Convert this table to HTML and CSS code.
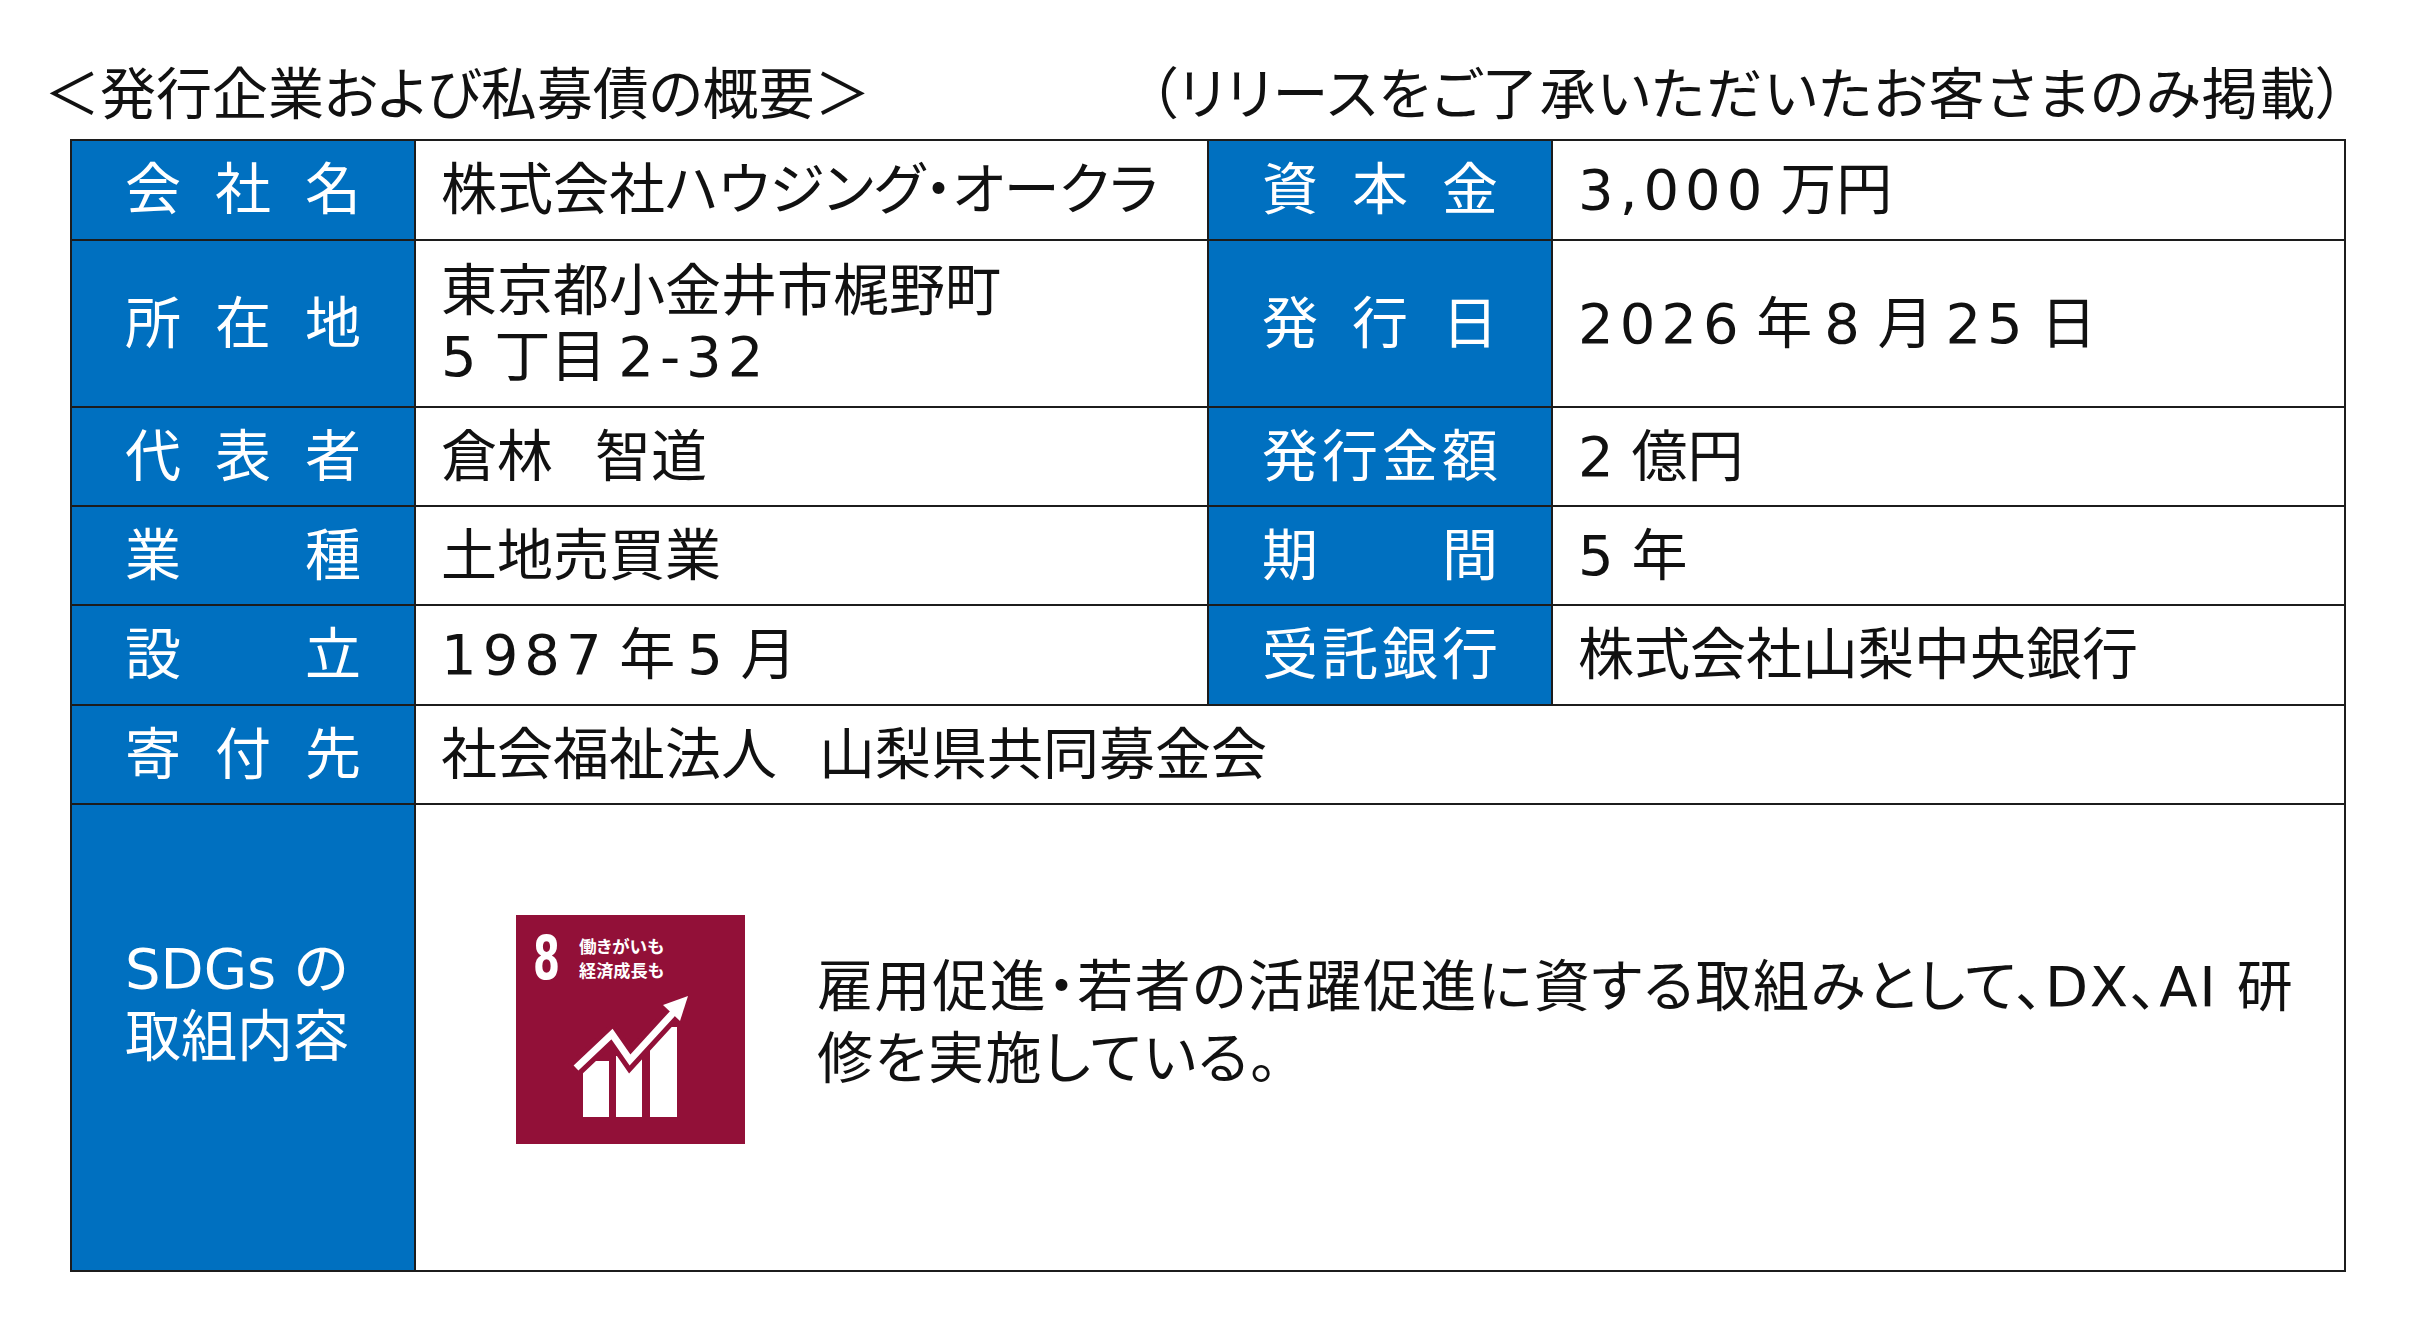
FILE: index.html
```html
<!DOCTYPE html>
<html lang="ja">
<head>
<meta charset="utf-8">
<title>発行企業および私募債の概要</title>
<link rel="stylesheet" href="styles.css">
</head>
<body>
<div class="page">
  <div class="head">
    <div class="head-left">＜発行企業および私募債の概要＞</div>
    <div class="head-right">（リリースをご了承いただいたお客さまのみ掲載）</div>
  </div>
  <div class="sheet">
    <div class="lab"><div class="sp"><span>会</span><span>社</span><span>名</span></div></div>
    <div class="val"><div class="txt">株式会社ハウジング・オークラ</div></div>
    <div class="lab"><div class="sp"><span>資</span><span>本</span><span>金</span></div></div>
    <div class="val"><div class="txt"><span class="num">3,000</span> 万円</div></div>

    <div class="lab"><div class="sp"><span>所</span><span>在</span><span>地</span></div></div>
    <div class="val"><div class="txt">東京都小金井市梶野町<br><span class="num">5</span> 丁目 <span class="num">2-32</span></div></div>
    <div class="lab"><div class="sp"><span>発</span><span>行</span><span>日</span></div></div>
    <div class="val"><div class="txt"><span class="num">2026</span> 年 <span class="num">8</span> 月 <span class="num">25</span> 日</div></div>

    <div class="lab"><div class="sp"><span>代</span><span>表</span><span>者</span></div></div>
    <div class="val"><div class="txt">倉林<span class="zs">　</span>智道</div></div>
    <div class="lab"><div class="sp"><span>発</span><span>行</span><span>金</span><span>額</span></div></div>
    <div class="val"><div class="txt"><span class="num">2</span> 億円</div></div>

    <div class="lab"><div class="sp"><span>業</span><span>種</span></div></div>
    <div class="val"><div class="txt">土地売買業</div></div>
    <div class="lab"><div class="sp"><span>期</span><span>間</span></div></div>
    <div class="val"><div class="txt"><span class="num">5</span> 年</div></div>

    <div class="lab"><div class="sp"><span>設</span><span>立</span></div></div>
    <div class="val"><div class="txt"><span class="num">1987</span> 年 <span class="num">5</span> 月</div></div>
    <div class="lab"><div class="sp"><span>受</span><span>託</span><span>銀</span><span>行</span></div></div>
    <div class="val"><div class="txt">株式会社山梨中央銀行</div></div>

    <div class="lab"><div class="sp"><span>寄</span><span>付</span><span>先</span></div></div>
    <div class="val wide"><div class="txt">社会福祉法人<span class="zs">　</span>山梨県共同募金会</div></div>

    <div class="lab lab-sdg"><div class="sdg-title">SDGs の<br>取組内容</div></div>
    <div class="val wide sdg-val">
      <svg class="sdg-icon" width="229" height="229" viewBox="0 0 229 229" xmlns="http://www.w3.org/2000/svg">
        <rect x="0" y="0" width="229" height="229" fill="#921038"/>
        <text x="17" y="64" class="sdg-num" textLength="27" lengthAdjust="spacingAndGlyphs">8</text>
        <text x="63" y="38" class="sdg-txt" textLength="85" lengthAdjust="spacingAndGlyphs">働きがいも</text>
        <text x="63" y="62" class="sdg-txt" textLength="85" lengthAdjust="spacingAndGlyphs">経済成長も</text>
        <rect x="67" y="146" width="26" height="56" fill="#fff"/>
        <rect x="100" y="141" width="26" height="61" fill="#fff"/>
        <rect x="134" y="112" width="27" height="90" fill="#fff"/>
        <polyline points="58,155 96,119 114,145 157,98" fill="none" stroke="#921038" stroke-width="17" stroke-linejoin="miter"/>
        <polyline points="60,153 96,119 114,145 157,98" fill="none" stroke="#fff" stroke-width="7" stroke-linejoin="miter"/>
        <polygon points="172,81 164,106 147,90" fill="#fff"/>
      </svg>
      <p class="sdg-desc">雇用促進・若者の活躍促進に資する取組みとして、DX、AI 研<br>修を実施している。</p>
    </div>
  </div>
</div>
</body>
</html>
```

FILE: styles.css
```css
* { box-sizing: border-box; }
html, body { margin: 0; padding: 0; background: #ffffff; }
body {
  font-family: "DejaVu Sans", "Noto Sans CJK JP", sans-serif;
  font-feature-settings: "palt";
  color: #111111;
}
.page {
  padding: 60px 0 0 70px;
  width: 2409px;
}
.head {
  display: flex;
  justify-content: space-between;
  width: 2302px;
  margin-left: -26px;
  font-size: 56px;
  line-height: 70px;
  height: 70px;
}
.head-right { letter-spacing: 1.4px; }
.sheet {
  margin-top: 9px;
  width: 2276px;
  display: grid;
  grid-template-columns: 342px 791px 342px 791px;
  grid-template-rows: 98px 165px 97px 97px 98px 97px 465px;
  gap: 2px;
  padding: 2px;
  background: #1c1c1c;
}
.lab {
  background: #0070c0;
  color: #ffffff;
  font-size: 56px;
  line-height: 66px;
  display: flex;
  align-items: center;
  justify-content: center;
}
.lab .sp {
  display: flex;
  justify-content: space-between;
  width: 236px;
}
.val {
  background: #ffffff;
  font-size: 56px;
  line-height: 66px;
  display: flex;
  align-items: center;
  padding-left: 25px;
  word-spacing: -6px;
}
.num { letter-spacing: 6px; }
.zs { letter-spacing: -14px; }
.wide { grid-column: span 3; }
.lab-sdg { padding-bottom: 70px; }
.sdg-title {
  width: 236px;
  line-height: 68px;
  text-align: left;
}
.sdg-val {
  align-items: center;
  justify-content: flex-start;
  padding-left: 100px;
  padding-bottom: 16px;
  gap: 72px;
  word-spacing: normal;
}
.sdg-icon { flex: none; display: block; }
.sdg-num {
  font-family: "DejaVu Sans Condensed", "DejaVu Sans", sans-serif;
  font-weight: bold;
  font-size: 60px;
  fill: #ffffff;
}
.sdg-txt {
  font-family: "Noto Sans CJK JP", sans-serif;
  font-weight: bold;
  font-size: 17px;
  fill: #ffffff;
}
.sdg-desc {
  margin: 0 0 14px 0;
  font-size: 56px;
  line-height: 72px;
  letter-spacing: 1.6px;
  white-space: nowrap;
}
```
